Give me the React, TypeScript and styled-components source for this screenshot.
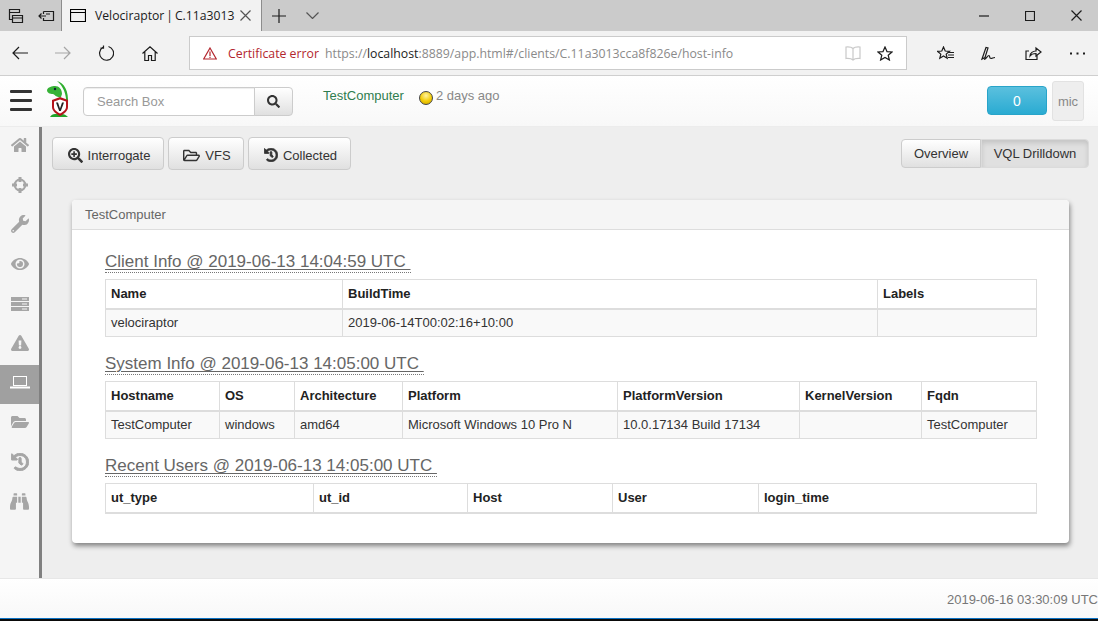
import React from "react";
import styled, { createGlobalStyle } from "styled-components";
import {
  FaBinoculars,
  FaExclamationTriangle,
  FaEye,
  FaFolderOpen,
  FaHistory,
  FaHome,
  FaRegFolderOpen,
  FaSearch,
  FaSearchPlus,
  FaWrench,
} from "react-icons/fa";

const GlobalStyle = createGlobalStyle`
  html, body {
    margin: 0;
    padding: 0;
    height: 100%;
    overflow: hidden;
    font-family: "Liberation Sans", Arial, sans-serif;
  }
  #root {
    height: 100%;
  }
  * {
    box-sizing: border-box;
  }
`;

const Page = styled.div`
  display: flex;
  flex-direction: column;
  height: 621px;
  background: #eee;
`;

/* browser chrome */
const TabBar = styled.div`
  display: flex;
  align-items: stretch;
  height: 31px;
  flex: none;
  background: #cbcbcb;
`;

const ChromeIcon = styled.span<{ $w?: number; $color?: string }>`
  display: flex;
  align-items: center;
  justify-content: center;
  flex: none;
  width: ${(p) => p.$w ?? 31}px;
  color: ${(p) => p.$color ?? "#1c1c1c"};
`;

const ActiveTab = styled.div`
  display: flex;
  align-items: center;
  width: 201px;
  margin-left: -1px;
  padding-left: 8px;
  background: #f2f2f2;
  border-left: 1px solid #8c8c8c;
  border-right: 1px solid #8c8c8c;
`;

const TabTitle = styled.span`
  width: 136px;
  margin-left: 9px;
  font-family: "Open Sans", sans-serif;
  font-size: 12.2px;
  word-spacing: -1.2px;
  color: #1b1b1b;
  white-space: nowrap;
`;

const WindowButtons = styled.div`
  display: flex;
  margin-left: auto;
  margin-right: -1px;
`;

const Toolbar = styled.div`
  display: flex;
  align-items: center;
  height: 45px;
  flex: none;
  background: #f2f2f2;
  border-bottom: 1px solid #cfcfcf;
`;

const NavCluster = styled.div`
  display: flex;
  width: 189px;
  flex: none;
`;

const UrlBox = styled.div`
  display: flex;
  align-items: center;
  width: 718px;
  height: 34px;
  flex: none;
  padding: 0 13px 0 13px;
  background: #fff;
  border: 1px solid #cbcbcb;
  font-family: "Open Sans", sans-serif;
  font-size: 12.3px;
  color: #8a8a8a;
  white-space: nowrap;
`;

const CertError = styled.span`
  margin: 0 6px 0 11px;
  color: #b3262e;
`;

const UrlHost = styled.span`
  color: #1c1c1c;
`;

const UrlEnd = styled.div`
  display: flex;
  align-items: center;
  gap: 16px;
  margin-left: auto;
`;

const ToolActions = styled.div`
  display: flex;
  flex: none;
  margin-left: 19px;
  gap: 6px;
`;

/* app navbar */
const NavBar = styled.header`
  display: flex;
  align-items: flex-start;
  height: 51px;
  flex: none;
  background: linear-gradient(#fff, #f8f8f8);
  border-bottom: 1px solid #ececec;
`;

const Burger = styled.div`
  display: flex;
  flex-direction: column;
  gap: 6px;
  width: 22px;
  margin: 14px 0 0 10px;
  flex: none;
`;

const BurgerBar = styled.i`
  display: block;
  height: 3px;
  background: #333;
  border-radius: 1px;
`;

const Logo = styled.svg`
  flex: none;
  margin: 5px 0 0 15px;
`;

const SearchGroup = styled.div`
  display: flex;
  height: 29px;
  width: 210px;
  margin: 11px 0 0 12px;
  flex: none;
`;

const SearchInput = styled.div`
  flex: 1;
  display: flex;
  align-items: center;
  padding-left: 13px;
  background: #fff;
  border: 1px solid #ccc;
  border-radius: 4px 0 0 4px;
  box-shadow: inset 0 1px 1px rgba(0, 0, 0, 0.075);
  font-size: 13px;
  color: #999;
`;

const SearchButton = styled.div`
  display: flex;
  align-items: center;
  justify-content: center;
  width: 39px;
  margin-left: -1px;
  background: linear-gradient(#fff, #e0e0e0);
  border: 1px solid #ccc;
  border-radius: 0 4px 4px 0;
  color: #333;
  font-size: 13px;
`;

const ClientName = styled.span`
  margin: 12px 0 0 30px;
  font-size: 13px;
  line-height: 16px;
  color: #2f7d4f;
`;

const StatusBall = styled.span`
  width: 14px;
  height: 14px;
  margin: 15px 3px 0 15px;
  flex: none;
  border-radius: 50%;
  border: 1px solid #444;
  background: radial-gradient(circle at 50% 30%, #fff3a0, #f2cb05 55%, #c9a400);
`;

const LastSeen = styled.span`
  margin-top: 12px;
  font-size: 13px;
  line-height: 16px;
  color: #888;
`;

const NavRight = styled.div`
  display: flex;
  align-items: flex-start;
  margin-left: auto;
  margin-right: 14px;
  gap: 5px;
`;

const CountButton = styled.div`
  display: flex;
  align-items: center;
  justify-content: center;
  width: 60px;
  height: 29px;
  margin-top: 10px;
  background: linear-gradient(#5bc0de, #2aabd2);
  border: 1px solid #28a4c9;
  border-radius: 4px;
  color: #fff;
  font-size: 14px;
`;

const UserBox = styled.div`
  display: flex;
  align-items: center;
  justify-content: center;
  width: 32px;
  height: 40px;
  margin-top: 5px;
  background: #eee;
  border: 1px solid #e2e2e2;
  border-radius: 3px;
  color: #888;
  font-size: 13px;
`;

/* body */
const Body = styled.div`
  display: flex;
  flex: 1;
  min-height: 0;
`;

const Sidebar = styled.nav`
  display: flex;
  flex-direction: column;
  width: 42px;
  flex: none;
  background: #f5f5f5;
  border-right: 3px solid #808080;
`;

const SideItem = styled.div<{ $active?: boolean }>`
  display: flex;
  align-items: center;
  justify-content: center;
  height: 39.6px;
  flex: none;
  padding-bottom: 3px;
  font-size: 18px;
  color: ${(p) => (p.$active ? "#fff" : "#a6a6a6")};
  background: ${(p) => (p.$active ? "#a0a0a0" : "transparent")};
`;

const Main = styled.main`
  flex: 1;
  min-width: 0;
  padding: 10px 9px 0 10px;
`;

const ActionRow = styled.div`
  display: flex;
  align-items: flex-start;
  justify-content: space-between;
  margin-bottom: 30px;
`;

const ButtonGroup = styled.div`
  display: flex;
  gap: 4px;
`;

const ActionButton = styled.div<{ $w: number }>`
  display: flex;
  align-items: center;
  justify-content: center;
  gap: 5px;
  width: ${(p) => p.$w}px;
  height: 33px;
  padding: 3px 0 0 2px;
  background: linear-gradient(#fff, #e0e0e0);
  border: 1px solid #ccc;
  border-radius: 4px;
  font-size: 13px;
  color: #333;
`;

const ToggleGroup = styled.div`
  display: flex;
  margin-top: 2px;
`;

const ToggleButton = styled.div<{ $w: number; $pressed?: boolean }>`
  display: flex;
  align-items: center;
  justify-content: center;
  width: ${(p) => p.$w}px;
  height: 29px;
  border: 1px solid ${(p) => (p.$pressed ? "#dbdbdb" : "#ccc")};
  border-radius: ${(p) => (p.$pressed ? "0 4px 4px 0" : "4px 0 0 4px")};
  background: ${(p) => (p.$pressed ? "#e0e0e0" : "linear-gradient(#fff, #e0e0e0)")};
  box-shadow: ${(p) => (p.$pressed ? "inset 0 3px 5px rgba(0, 0, 0, 0.125)" : "none")};
  font-size: 13px;
  color: #333;
`;

const Panel = styled.section`
  margin: 0 20px;
  height: 343px;
  background: #fff;
  border-radius: 4px;
  box-shadow: 1px 3px 5px rgba(0, 0, 0, 0.45);
`;

const PanelHeading = styled.div`
  display: flex;
  align-items: center;
  height: 30px;
  padding-left: 13px;
  background: #f5f5f5;
  border-bottom: 1px solid #ddd;
  border-radius: 4px 4px 0 0;
  font-size: 13px;
  color: #666;
`;

const PanelBody = styled.div`
  padding: 22px 32px 0 33px;
`;

const SectionTitle = styled.h3`
  display: block;
  width: fit-content;
  margin: 0 0 6px;
  font-size: 17px;
  font-weight: 400;
  line-height: 20px;
  color: #666;
  text-decoration: underline;
  text-underline-offset: 2px;
  text-decoration-thickness: 1px;
  white-space: pre;
  border-bottom: 1px dotted #777;
  height: 21px;
`;

const InfoTable = styled.table`
  width: 931px;
  table-layout: fixed;
  border-collapse: collapse;
  margin-bottom: 17px;
  font-size: 13px;
  color: #333;
`;

const HeadCell = styled.th`
  height: 29px;
  padding: 0 5px 1px;
  text-align: left;
  font-weight: 700;
  color: #222;
  background: #fff;
  border: 1px solid #ddd;
  border-bottom: 2px solid #ddd;
`;

const DataCell = styled.td`
  height: 28px;
  padding: 0 5px;
  background: #f9f9f9;
  border: 1px solid #ddd;
  white-space: nowrap;
`;

const Footer = styled.footer`
  display: flex;
  align-items: center;
  justify-content: flex-end;
  height: 40px;
  flex: none;
  padding-top: 1px;
  background: linear-gradient(#fff, #f8f8f8);
  border-top: 1px solid #e7e7e7;
  font-size: 13px;
  color: #777;
`;

const WindowEdge = styled.div`
  height: 3px;
  flex: none;
  background: #0a0a0a;
  border-top: 1px solid #0c72c4;
`;

const line = { fill: "none", stroke: "currentColor", strokeWidth: 1.2 };

const tables = [
  {
    title: "Client Info @ 2019-06-13 14:04:59 UTC ",
    cols: [
      ["Name", 237],
      ["BuildTime", 535],
      ["Labels", 159],
    ],
    rows: [["velociraptor", "2019-06-14T00:02:16+10:00", ""]],
  },
  {
    title: "System Info @ 2019-06-13 14:05:00 UTC ",
    cols: [
      ["Hostname", 114],
      ["OS", 75],
      ["Architecture", 108],
      ["Platform", 215],
      ["PlatformVersion", 182],
      ["KernelVersion", 122],
      ["Fqdn", 115],
    ],
    rows: [
      [
        "TestComputer",
        "windows",
        "amd64",
        "Microsoft Windows 10 Pro N",
        "10.0.17134 Build 17134",
        "",
        "TestComputer",
      ],
    ],
  },
  {
    title: "Recent Users @ 2019-06-13 14:05:00 UTC ",
    cols: [
      ["ut_type", 208],
      ["ut_id", 154],
      ["Host", 145],
      ["User", 146],
      ["login_time", 278],
    ],
    rows: [],
  },
] as { title: string; cols: [string, number][]; rows: string[][] }[];

function Crosshair() {
  return (
    <svg width="18" height="18" viewBox="0 0 18 18">
      <circle cx="9" cy="9" r="5.4" fill="none" stroke="currentColor" strokeWidth="2" />
      <path
        d="M7.500 1h3v5h-3zM7.500 12h3v5h-3zM1 7.500h5v3H1zM12 7.500h5v3h-5z"
        fill="currentColor"
      />
    </svg>
  );
}

function ServerStack() {
  return (
    <svg width="18" height="14" viewBox="0 0 18 14">
      <path d="M0 0h18v4H0zM0 5h18v4H0zM0 10h18v4H0z" fill="currentColor" />
      <path d="M11 2h5M11 7h5M11 12h5" stroke="#f5f5f5" strokeWidth="1" />
    </svg>
  );
}

function Laptop() {
  return (
    <svg width="20" height="13" viewBox="0 0 20 13">
      <rect x="3.500" y="0.500" width="13" height="9" fill="none" stroke="currentColor" strokeWidth="1" />
      <path d="M0 10.500h20V12.500H0z" fill="currentColor" />
    </svg>
  );
}

function VeloLogo() {
  return (
    <Logo width="24" height="37" viewBox="0 0 24 37">
      <path d="M10 0c7 2 12 9 11 24l-2 0c1-11-3-19-9-24z" fill="#2fae2f" />
      <path
        d="M0 9c1-3 5-4 8-4 4 0 7 3 7 8l-1 3c-4 1-6-2-8-3-3 0-6-1-6-4z"
        fill="#36b236"
      />
      <circle cx="8" cy="8" r="1.200" fill="#123" />
      <path d="M3 36c1-2 3-3 5-3h7c2 0 4 1 6 3z" fill="#22a52a" />
      <path d="M5 19l8-3 8 3v7c0 4-4 7-8 9-4-2-8-5-8-9z" fill="#b5141c" />
      <path d="M7 20.500l6-2 6 2v5.500c0 3-3 5-6 6.500-3-1.500-6-3.500-6-6.500z" fill="#fff" />
      <path d="M9 21.500h2l2 6 2-6h2l-3.200 8.500h-1.600z" fill="#222" />
    </Logo>
  );
}

export default function App() {
  return (
    <Page>
      <GlobalStyle />
      <TabBar>
        <ChromeIcon $w={31}>
          <svg width="16" height="16" viewBox="0 0 16 16">
            <path d="M1.500 1.500h10v3h-10zM1.500 4.500v7h3M4.500 7.500h10v7h-10zM4.500 10h10" {...line} />
          </svg>
        </ChromeIcon>
        <ChromeIcon $w={31}>
          <svg width="17" height="14" viewBox="0 0 17 14">
            <path d="M5.500 2.500h10v9h-10V9M5.500 5V2.500M1 7h7M3.500 4.500L1 7l2.500 2.500M8 5h4" {...line} />
          </svg>
        </ChromeIcon>
        <ActiveTab>
          <svg width="16" height="13" viewBox="0 0 16 13">
            <path d="M0.500 0.500h15v12h-15zM0.500 3.500h15" {...line} />
          </svg>
          <TabTitle>Velociraptor | C.11a3013</TabTitle>
          <ChromeIcon $w={28} $color="#555">
            <svg width="11" height="11" viewBox="0 0 11 11">
              <path d="M0.500 0.500l10 10M10.500 0.500l-10 10" {...line} />
            </svg>
          </ChromeIcon>
        </ActiveTab>
        <ChromeIcon $w={34}>
          <svg width="14" height="14" viewBox="0 0 14 14">
            <path d="M7 0v14M0 7h14" {...line} />
          </svg>
        </ChromeIcon>
        <ChromeIcon $w={32} $color="#555">
          <svg width="13" height="7" viewBox="0 0 13 7">
            <path d="M0.500 0.500l6 6 6-6" {...line} />
          </svg>
        </ChromeIcon>
        <WindowButtons>
          <ChromeIcon $w={46}>
            <svg width="10" height="2" viewBox="0 0 10 2">
              <path d="M0 1h10" {...line} />
            </svg>
          </ChromeIcon>
          <ChromeIcon $w={46}>
            <svg width="10" height="10" viewBox="0 0 10 10">
              <path d="M0.500 0.500h9v9h-9z" {...line} />
            </svg>
          </ChromeIcon>
          <ChromeIcon $w={46}>
            <svg width="11" height="11" viewBox="0 0 11 11">
              <path d="M0.500 0.500l10 10M10.500 0.500l-10 10" {...line} />
            </svg>
          </ChromeIcon>
        </WindowButtons>
      </TabBar>
      <Toolbar>
        <NavCluster>
          <ChromeIcon $w={39}>
            <svg width="16" height="14" viewBox="0 0 16 14">
              <path d="M16 7H1M7 1L1 7l6 6" {...line} />
            </svg>
          </ChromeIcon>
          <ChromeIcon $w={47} $color="#a5a5a5">
            <svg width="16" height="14" viewBox="0 0 16 14">
              <path d="M0 7h15M9 1l6 6-6 6" {...line} />
            </svg>
          </ChromeIcon>
          <ChromeIcon $w={40}>
            <svg width="16" height="16" viewBox="0 0 16 16">
              <path d="M5 2.200A7 7 0 1 0 10.500 1.500M5.500 0.500V3.200H2.500" {...line} />
            </svg>
          </ChromeIcon>
          <ChromeIcon $w={48}>
            <svg width="16" height="15" viewBox="0 0 16 15">
              <path d="M0.500 7.500L8 0.800l7.500 6.700M2.800 6v8.500h3.700V9.500h3v5h3.700V6" {...line} />
            </svg>
          </ChromeIcon>
        </NavCluster>
        <UrlBox>
          <svg width="14" height="13" viewBox="0 0 14 13">
            <path d="M7 1l6.300 11H0.700zM7 4.500V9M7 9.800v1.200" fill="none" stroke="#b3262e" strokeWidth="1.200" />
          </svg>
          <CertError>Certificate error</CertError>
          <span>
            https://<UrlHost>localhost</UrlHost>:8889/app.html#/clients/C.11a3013cca8f826e/host-info
          </span>
          <UrlEnd>
            <ChromeIcon $w={16} $color="#c9c9c9">
              <svg width="16" height="15" viewBox="0 0 16 15">
                <path d="M8 2.500C6.500 1 3.500 0.800 1 1v11.500c2.500-0.200 5.500 0 7 1.500 1.500-1.500 4.500-1.700 7-1.500V1c-2.500-0.200-5.500 0-7 1.500zM8 2.500V14" {...line} />
              </svg>
            </ChromeIcon>
            <ChromeIcon $w={16}>
              <svg width="16" height="15" viewBox="0 0 16 15">
                <path d="M8 1l2 4.600 5 0.400-3.800 3.200 1.200 4.800L8 11.400 3.600 14l1.200-4.800L1 6l5-0.400z" {...line} />
              </svg>
            </ChromeIcon>
          </UrlEnd>
        </UrlBox>
        <ToolActions>
          <ChromeIcon $w={38}>
            <svg width="17" height="14" viewBox="0 0 17 14">
              <path d="M6.500 1l1.700 4 4.300 0.300-3.300 2.800 1 4.200-3.700-2.300-3.700 2.300 1-4.200L0.500 5.300l4.300-0.300z" {...line} />
              <path d="M11 6.500h6M11 9h6M11 11.500h6" {...line} />
            </svg>
          </ChromeIcon>
          <ChromeIcon $w={38}>
            <svg width="16" height="15" viewBox="0 0 16 15">
              <path d="M5 1.500L1 13l3-1.500 3-9.500zM3 13.500c3-1 3-4 5-4 1 0 0 3 2 3 1.500 0 2-1 4-1" {...line} />
            </svg>
          </ChromeIcon>
          <ChromeIcon $w={38}>
            <svg width="17" height="15" viewBox="0 0 17 15">
              <path d="M12 8.500V13.500H1V5h3M5 10c0-3 3-5 6-5V2l5 4-5 4V7.500c-3 0-5 1-6 2.500z" {...line} />
            </svg>
          </ChromeIcon>
          <ChromeIcon $w={38}>
            <svg width="15" height="3" viewBox="0 0 15 3">
              <path d="M0 0.500h2v2H0zM6.500 0.500h2v2h-2zM13 0.500h2v2h-2z" fill="currentColor" />
            </svg>
          </ChromeIcon>
        </ToolActions>
      </Toolbar>
      <NavBar>
        <Burger>
          <BurgerBar />
          <BurgerBar />
          <BurgerBar />
        </Burger>
        <VeloLogo />
        <SearchGroup>
          <SearchInput>Search Box</SearchInput>
          <SearchButton>
            <FaSearch />
          </SearchButton>
        </SearchGroup>
        <ClientName>TestComputer</ClientName>
        <StatusBall />
        <LastSeen>2 days ago</LastSeen>
        <NavRight>
          <CountButton>0</CountButton>
          <UserBox>mic</UserBox>
        </NavRight>
      </NavBar>
      <Body>
        <Sidebar>
          <SideItem><FaHome /></SideItem>
          <SideItem><Crosshair /></SideItem>
          <SideItem><FaWrench /></SideItem>
          <SideItem><FaEye /></SideItem>
          <SideItem><ServerStack /></SideItem>
          <SideItem><FaExclamationTriangle /></SideItem>
          <SideItem $active><Laptop /></SideItem>
          <SideItem><FaFolderOpen /></SideItem>
          <SideItem><FaHistory strokeWidth={28} /></SideItem>
          <SideItem><FaBinoculars size={19} /></SideItem>
        </Sidebar>
        <Main>
          <ActionRow>
            <ButtonGroup>
              <ActionButton $w={112}><FaSearchPlus size={15} />Interrogate</ActionButton>
              <ActionButton $w={76}><FaRegFolderOpen size={17} />VFS</ActionButton>
              <ActionButton $w={103}><FaHistory size={14} strokeWidth={28} />Collected</ActionButton>
            </ButtonGroup>
            <ToggleGroup>
              <ToggleButton $w={80}>Overview</ToggleButton>
              <ToggleButton $w={108} $pressed>VQL Drilldown</ToggleButton>
            </ToggleGroup>
          </ActionRow>
          <Panel>
            <PanelHeading>TestComputer</PanelHeading>
            <PanelBody>
              {tables.map((t) => (
                <div key={t.title}>
                  <SectionTitle>{t.title}</SectionTitle>
                  <InfoTable>
                    <colgroup>
                      {t.cols.map(([name, w]) => (
                        <col key={name} style={{ width: w }} />
                      ))}
                    </colgroup>
                    <thead>
                      <tr>
                        {t.cols.map(([name]) => (
                          <HeadCell key={name}>{name}</HeadCell>
                        ))}
                      </tr>
                    </thead>
                    <tbody>
                      {t.rows.map((row, i) => (
                        <tr key={i}>
                          {row.map((v, j) => (
                            <DataCell key={j}>{v}</DataCell>
                          ))}
                        </tr>
                      ))}
                    </tbody>
                  </InfoTable>
                </div>
              ))}
            </PanelBody>
          </Panel>
        </Main>
      </Body>
      <Footer>2019-06-16 03:30:09 UTC</Footer>
      <WindowEdge />
    </Page>
  );
}
